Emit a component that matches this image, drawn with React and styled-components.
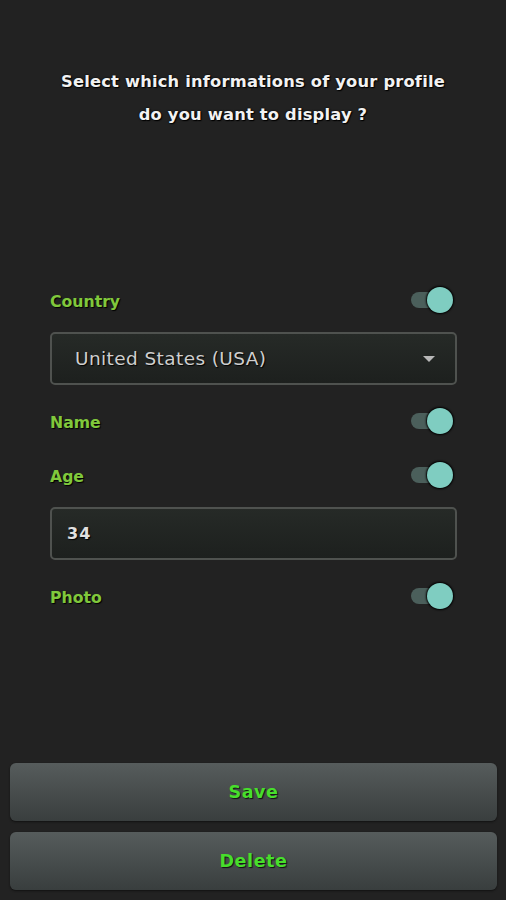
import React, { useState } from 'react'
import styled, { createGlobalStyle } from 'styled-components'

const GlobalStyle = createGlobalStyle`
  html, body {
    margin: 0;
    padding: 0;
    background: #222222;
  }
  * { box-sizing: border-box; }
`

const Page = styled.div`
  min-height: 900px;
  display: flex;
  flex-direction: column;
  background: #222222;
  font-family: "DejaVu Sans", "Open Sans", sans-serif;
`

const Title = styled.div`
  padding-top: 65px;
  text-align: center;
  color: #f2f2f2;
  font-size: 16.3px;
  font-weight: bold;
  line-height: 33px;
  letter-spacing: 0.2px;
  text-shadow: 0 0 2px #000, 1px 1px 1px #000;
`

const Form = styled.div`
  margin-top: 151px;
  padding: 0 49px 0 50px;
  display: flex;
  flex-direction: column;
  gap: 18px;
`

const Row = styled.div`
  height: 36px;
  display: flex;
  align-items: center;
  justify-content: space-between;
`

const Label = styled.span`
  padding-top: 2px;
  color: #80c83c;
  font-size: 15.7px;
  font-weight: bold;
  text-shadow: 1px 1px 1px #000;
`

const Track = styled.button`
  position: relative;
  width: 44px;
  height: 28px;
  margin-right: 2px;
  padding: 0;
  border: none;
  background: transparent;
  cursor: pointer;
  &::before {
    content: '';
    position: absolute;
    left: 0;
    top: 6px;
    width: 38px;
    height: 16px;
    border-radius: 8px;
    background: ${p => (p.$on ? '#4b5f5b' : '#555')};
  }
`

const Thumb = styled.span`
  position: absolute;
  top: 1px;
  left: ${p => (p.$on ? '16px' : '0')};
  width: 26px;
  height: 26px;
  border-radius: 50%;
  background: ${p => (p.$on ? '#7fcdc1' : '#bbb')};
  box-shadow: 0 0 2px 1px #000;
`

const Field = styled.div`
  margin-top: -4px;
  height: 53px;
  display: flex;
  align-items: center;
  justify-content: space-between;
  padding: ${p => (p.$select ? '0 20px 0 23px' : '0 15px')};
  border: 2px solid #4f524f;
  border-radius: 5px;
  background: linear-gradient(#262a27, #1d201e);
  color: ${p => (p.$select ? '#cfcfcf' : '#e0e0e0')};
  font-size: ${p => (p.$select ? '18.5px' : '16px')};
  font-weight: ${p => (p.$select ? 'normal' : 'bold')};
  letter-spacing: ${p => (p.$select ? '0.4px' : '1px')};
  text-shadow: 1px 1px 1px #000;
`

const Caret = styled.span`
  width: 0;
  height: 0;
  border-left: 6px solid transparent;
  border-right: 6px solid transparent;
  border-top: 6px solid #b8b8b8;
`

const Footer = styled.div`
  margin-top: auto;
  padding: 0 9px 10px 10px;
  display: flex;
  flex-direction: column;
  gap: 11px;
`

const Button = styled.button`
  height: 58px;
  border: none;
  border-radius: 6px;
  background: linear-gradient(#565c5c, #393e3e);
  box-shadow: 0 1px 2px #111;
  color: #47de2c;
  font-family: "DejaVu Sans", "Open Sans", sans-serif;
  font-size: 17.5px;
  font-weight: bold;
  letter-spacing: 0.6px;
  cursor: pointer;
  text-shadow: 1px 1px 1px #111;
`

const Toggle = ({ on, onClick }) => (
  <Track $on={on} onClick={onClick}>
    <Thumb $on={on} />
  </Track>
)

const App = () => {
  const [flags, setFlags] = useState({ country: true, name: true, age: true, photo: true })
  const flip = key => () => setFlags(f => ({ ...f, [key]: !f[key] }))

  return (
    <Page>
      <GlobalStyle />
      <Title>
        Select which informations of your profile
        <br />
        do you want to display ?
      </Title>
      <Form>
        <Row>
          <Label>Country</Label>
          <Toggle on={flags.country} onClick={flip('country')} />
        </Row>
        <Field $select>
          <span>United States (USA)</span>
          <Caret />
        </Field>
        <Row>
          <Label>Name</Label>
          <Toggle on={flags.name} onClick={flip('name')} />
        </Row>
        <Row>
          <Label>Age</Label>
          <Toggle on={flags.age} onClick={flip('age')} />
        </Row>
        <Field>
          <span>34</span>
        </Field>
        <Row>
          <Label>Photo</Label>
          <Toggle on={flags.photo} onClick={flip('photo')} />
        </Row>
      </Form>
      <Footer>
        <Button>Save</Button>
        <Button>Delete</Button>
      </Footer>
    </Page>
  )
}

export default App
